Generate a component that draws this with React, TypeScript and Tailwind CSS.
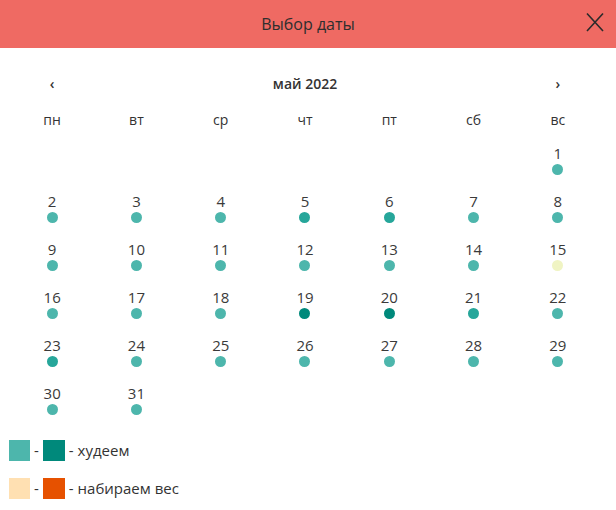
import React from "react";

type Day = { n: number; c: string };

const L = "bg-[#4db6ac]";
const M = "bg-[#26a69a]";
const D = "bg-[#00897b]";
const Y = "bg-[#f0f4c3]";

const colors: Record<number, string> = {
  5: M,
  6: M,
  15: Y,
  19: D,
  20: D,
  21: M,
  23: M,
};

const weekdays = ["пн", "вт", "ср", "чт", "пт", "сб", "вс"];

export default function App() {
  // May 2022 starts on Sunday -> 6 empty cells
  const cells: (Day | null)[] = [];
  for (let i = 0; i < 6; i++) cells.push(null);
  for (let d = 1; d <= 31; d++) cells.push({ n: d, c: colors[d] ?? L });

  return (
    <div
      className="w-[616px] h-[510px] bg-white text-[#333] overflow-hidden"
      style={{ fontFamily: '"Open Sans", "Noto Sans", sans-serif' }}
    >
      {/* Header */}
      <div className="relative h-[48px] bg-[#ef6a63] flex items-center justify-center">
        <span className="text-[16px] text-[#2e2e2e]">Выбор даты</span>
        <button className="absolute right-[11px] top-[12px] w-[20px] h-[20px] flex items-center justify-center">
          <svg width="20" height="20" viewBox="0 0 20 20" fill="none">
            <path d="M2 1.5 L18 19 M18 1.5 L2 19" stroke="#2b2b2b" strokeWidth="1.6" />
          </svg>
        </button>
      </div>

      <div className="pl-[10px] pr-[16px]">
        {/* Month */}
        <div className="mt-[20px] h-[30px] grid grid-cols-7 items-center">
          <div className="text-center text-[14px] font-semibold">‹</div>
          <div className="col-span-5 text-center text-[14px] font-semibold">май 2022</div>
          <div className="text-center text-[14px] font-semibold">›</div>
        </div>

        {/* Weekdays */}
        <div className="mt-[6px] h-[30px] grid grid-cols-7 items-center">
          {weekdays.map((w) => (
            <div key={w} className="text-center text-[14px]">
              {w}
            </div>
          ))}
        </div>

        {/* Days */}
        <div className="mt-[9px] grid grid-cols-7 auto-rows-[48px]">
          {cells.map((cell, i) =>
            cell ? (
              <div key={i} className="flex flex-col items-center">
                <span className="h-[20px] leading-[20px] text-[15px] text-[#3a3a3a]">{cell.n}</span>
                <span className={`mt-[1px] w-[11px] h-[11px] rounded-full ${cell.c}`} />
              </div>
            ) : (
              <div key={i} />
            )
          )}
        </div>

        {/* Legend */}
        <div className="mt-[9px] flex flex-col gap-[17px] -ml-[1px]">
          <div className="flex items-center h-[21px] text-[15px]">
            <span className="w-[21px] h-[21px] bg-[#4db6ac]" />
            <span className="mx-[4px]">-</span>
            <span className="w-[22px] h-[21px] bg-[#00897b]" />
            <span className="ml-[4px]">- худеем</span>
          </div>
          <div className="flex items-center h-[21px] text-[15px]">
            <span className="w-[21px] h-[21px] bg-[#ffe0b2]" />
            <span className="mx-[4px]">-</span>
            <span className="w-[22px] h-[21px] bg-[#e65100]" />
            <span className="ml-[4px]">- набираем вес</span>
          </div>
        </div>
      </div>
    </div>
  );
}
